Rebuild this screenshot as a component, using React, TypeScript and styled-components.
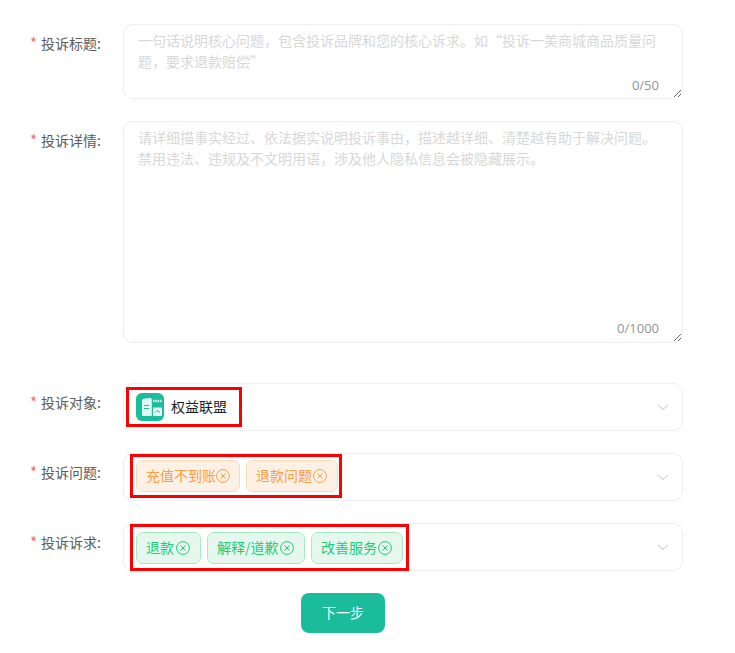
import React from 'react';
import styled, { createGlobalStyle } from 'styled-components';

const GlobalStyle = createGlobalStyle`
  html, body {
    margin: 0;
    padding: 0;
    background: #fff;
    font-family: "Noto Sans CJK SC", "Open Sans", sans-serif;
  }
`;

const Form = styled.form`
  width: 686px;
  padding-top: 24px;
  box-sizing: border-box;
`;

const Row = styled.div<{ $gap?: number }>`
  display: flex;
  margin-bottom: ${({ $gap }) => $gap ?? 22}px;
`;

const Label = styled.label`
  width: 123px;
  flex: none;
  box-sizing: border-box;
  padding: 9px 0 0 30px;
  font-size: 14px;
  line-height: 20px;
  color: #5a5c61;
  white-space: nowrap;

  &::before {
    content: '*';
    color: #f56c6c;
    margin-right: 4px;
    font-size: 15px;
  }
`;

const TextAreaWrap = styled.div`
  position: relative;
  width: 560px;
`;

const TextArea = styled.textarea<{ $height: number }>`
  display: block;
  width: 100%;
  height: ${({ $height }) => $height}px;
  box-sizing: border-box;
  padding: 5px 15px 6px 14px;
  border: 1px solid #ebeef2;
  border-radius: 10px;
  outline: none;
  font-family: inherit;
  font-size: 14px;
  line-height: 21px;
  color: #333;
  background: #fff;

  &::placeholder {
    color: #d8d8d8;
    opacity: 1;
  }
`;

const Counter = styled.span<{ $bottom: number }>`
  position: absolute;
  right: 24px;
  bottom: ${({ $bottom }) => $bottom}px;
  font-family: "Open Sans", sans-serif;
  font-size: 13px;
  line-height: 18px;
  color: #909399;
`;

const SelectBox = styled.div<{ $pad: number; $top: number }>`
  display: flex;
  align-items: flex-start;
  width: 560px;
  height: 48px;
  box-sizing: border-box;
  padding: ${({ $top }) => $top}px 0 0 ${({ $pad }) => $pad}px;
  border: 1px solid #ebeef2;
  border-radius: 10px;
  position: relative;
  background: #fff;
`;

const Chevron = styled.svg`
  position: absolute;
  right: 13px;
  top: 17px;
  width: 12px;
  height: 12px;
  fill: none;
  stroke: #d5d8dd;
  stroke-width: 1.2;
`;

const Highlight = styled.div<{ $width: number; $height: number; $inset: string; $gap: number }>`
  display: flex;
  align-items: center;
  gap: ${({ $gap }) => $gap}px;
  flex: none;
  width: ${({ $width }) => $width}px;
  height: ${({ $height }) => $height}px;
  box-sizing: border-box;
  padding: ${({ $inset }) => $inset};
  border: 3px solid #ff0000;
`;

const AppLogo = styled.svg`
  width: 28px;
  height: 28px;
  flex: none;
  margin-right: 7px;
`;

const TargetName = styled.span`
  font-size: 14px;
  line-height: 20px;
  margin-top: -2px;
  color: #1c1c1c;
  white-space: nowrap;
`;

const tones = {
  orange: { text: '#ff9c45', bg: '#fdf1e6', border: '#fcd9b5' },
  green: { text: '#1fcb77', bg: '#e6f8ee', border: '#a3ebc1' },
};

type Tone = keyof typeof tones;

const Tag = styled.span<{ $tone: Tone; $width: number }>`
  display: inline-flex;
  align-items: center;
  justify-content: space-between;
  flex: none;
  width: ${({ $width }) => $width}px;
  height: 32px;
  box-sizing: border-box;
  padding: 0 10px 2px 9px;
  border: 1px solid ${({ $tone }) => tones[$tone].border};
  border-radius: 7px;
  background: ${({ $tone }) => tones[$tone].bg};
  color: ${({ $tone }) => tones[$tone].text};
  font-size: 14px;
  white-space: nowrap;
`;

const CloseIcon = styled.svg`
  width: 14px;
  height: 14px;
  flex: none;
  margin-top: 2px;
  fill: none;
  stroke: currentColor;
  stroke-width: 1;
`;

const Footer = styled.div`
  display: flex;
  justify-content: center;
`;

const NextButton = styled.button`
  width: 84px;
  height: 40px;
  padding: 0 0 2px;
  border: none;
  border-radius: 8px;
  background: #1abc9c;
  color: #fff;
  font-family: inherit;
  font-size: 14px;
  cursor: pointer;
`;

const TagClose = () => (
  <CloseIcon viewBox="0 0 14 14">
    <circle cx="7" cy="7" r="6.4" />
    <path d="M4.5 4.500l5 5M9.500 4.500l-5 5" />
  </CloseIcon>
);

const Arrow = () => (
  <Chevron viewBox="0 0 12 12">
    <path d="M1 4l5 4.500L11 4" />
  </Chevron>
);

const Logo = () => (
  <AppLogo viewBox="0 0 28 28">
    <rect width="28" height="28" rx="6" fill="#1abc9c" />
    <path d="M6 7.500c0-1 .7-1.500 1.600-1.700L14 5c1 0 1.800.6 1.800 1.600V23H7.500C6.600 23 6 22.400 6 21.500z" fill="#e4f8f3" />
    <path d="M8 12.500h5M8 15.500h5" stroke="#1abc9c" strokeWidth="1" />
    <rect x="17" y="14.500" width="9" height="8.500" rx="1" fill="#e4f8f3" />
    <path d="M19 19.500l2-2 3 2" stroke="#1abc9c" strokeWidth="1" fill="none" />
    <path d="M17 8h9" stroke="#d2f2ea" strokeWidth="2.500" strokeDasharray="1.600 .7" />
  </AppLogo>
);

export default function App() {
  return (
    <>
      <GlobalStyle />
      <Form>
        <Row>
          <Label>投诉标题:</Label>
          <TextAreaWrap>
            <TextArea
              $height={75}
              placeholder="一句话说明核心问题，包含投诉品牌和您的核心诉求。如“投诉一美商城商品质量问题，要求退款赔偿”"
            />
            <Counter $bottom={5}>0/50</Counter>
          </TextAreaWrap>
        </Row>
        <Row $gap={40}>
          <Label>投诉详情:</Label>
          <TextAreaWrap>
            <TextArea
              $height={222}
              placeholder="请详细描事实经过、依法据实说明投诉事由，描述越详细、清楚越有助于解决问题。禁用违法、违规及不文明用语，涉及他人隐私信息会被隐藏展示。"
            />
            <Counter $bottom={6}>0/1000</Counter>
          </TextAreaWrap>
        </Row>
        <Row>
          <Label>投诉对象:</Label>
          <SelectBox $pad={2} $top={3}>
            <Highlight $width={116} $height={40} $inset="0 0 0 7px" $gap={0}>
              <Logo />
              <TargetName>权益联盟</TargetName>
            </Highlight>
            <Arrow />
          </SelectBox>
        </Row>
        <Row>
          <Label>投诉问题:</Label>
          <SelectBox $pad={6} $top={0}>
            <Highlight $width={212} $height={44} $inset="0 0 0 3px" $gap={6}>
              <Tag $tone="orange" $width={104}>充值不到账<TagClose /></Tag>
              <Tag $tone="orange" $width={92}>退款问题<TagClose /></Tag>
            </Highlight>
            <Arrow />
          </SelectBox>
        </Row>
        <Row>
          <Label>投诉诉求:</Label>
          <SelectBox $pad={6} $top={0}>
            <Highlight $width={279} $height={47} $inset="0 0 0 3px" $gap={6}>
              <Tag $tone="green" $width={65}>退款<TagClose /></Tag>
              <Tag $tone="green" $width={98}>解释/道歉<TagClose /></Tag>
              <Tag $tone="green" $width={92}>改善服务<TagClose /></Tag>
            </Highlight>
            <Arrow />
          </SelectBox>
        </Row>
        <Footer>
          <NextButton type="button">下一步</NextButton>
        </Footer>
      </Form>
    </>
  );
}
